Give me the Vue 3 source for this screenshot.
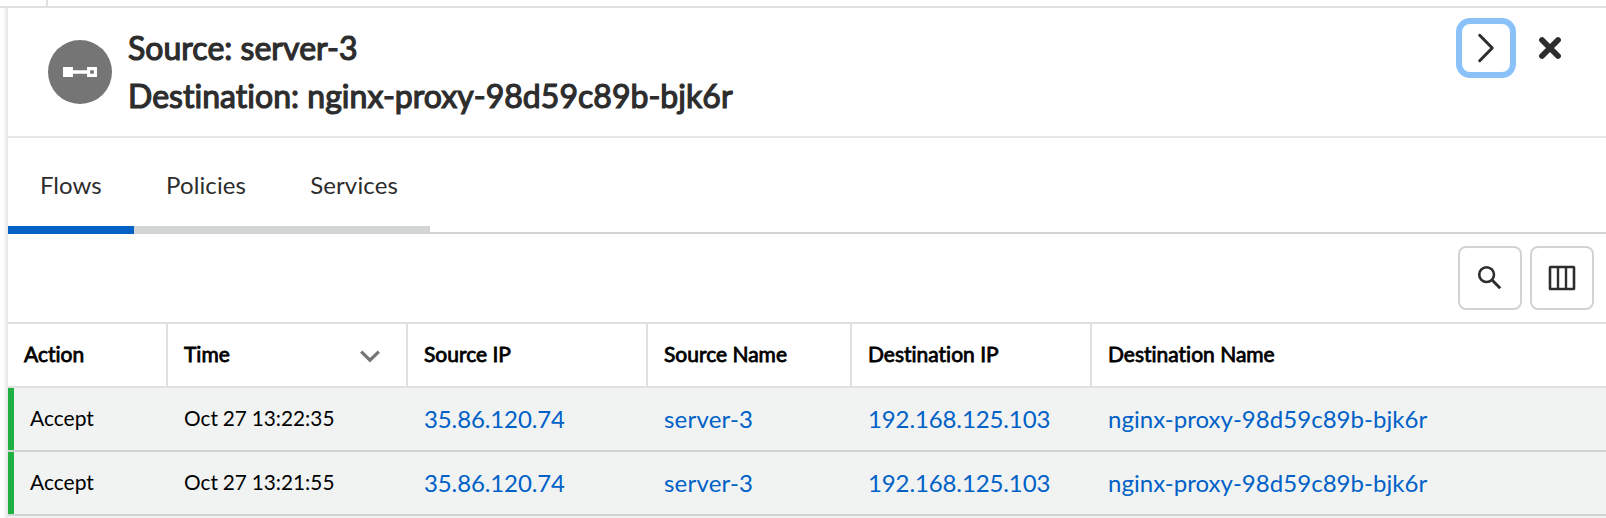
<script setup>
const tabs = [
  { label: 'Flows', active: true },
  { label: 'Policies', active: false },
  { label: 'Services', active: false },
]

const columns = ['Action', 'Time', 'Source IP', 'Source Name', 'Destination IP', 'Destination Name']

const flows = [
  { action: 'Accept', time: 'Oct 27 13:22:35', source: '35.86.120.74', sourceName: 'server-3', destination: '192.168.125.103', destinationName: 'nginx-proxy-98d59c89b-bjk6r' },
  { action: 'Accept', time: 'Oct 27 13:21:55', source: '35.86.120.74', sourceName: 'server-3', destination: '192.168.125.103', destinationName: 'nginx-proxy-98d59c89b-bjk6r' },
]
</script>

<template>
  <div class="page">
    <div class="strip"><div class="strip-cell"></div></div>
    <section class="panel">
      <header class="head">
        <div class="avatar">
          <svg width="64" height="64" viewBox="0 0 64 64">
            <circle cx="32" cy="32" r="32" fill="#757575" />
            <path fill="#fff" fill-rule="evenodd" d="M15 27h10v3.3h14V27h10v10H39v-3.3H25V37H15zM42.2 30.2v3.6h3.6v-3.6z" />
          </svg>
        </div>
        <h1 class="title">
          <span>Source: server-3</span>
          <span>Destination: nginx-proxy-98d59c89b-bjk6r</span>
        </h1>
        <div class="head-actions">
          <button class="expand" aria-label="Expand">
            <svg width="48" height="48" viewBox="0 0 48 48">
              <path d="M17.7 11.3L30.2 24L17.7 36.7" fill="none" stroke="#2d2d2d" stroke-width="3" stroke-linecap="round" stroke-linejoin="round" />
            </svg>
          </button>
          <button class="close" aria-label="Close">
            <svg width="24" height="24" viewBox="0 0 24 24">
              <path d="M4 4L20 20M20 4L4 20" fill="none" stroke="#2d2d2d" stroke-width="5.8" stroke-linecap="round" />
            </svg>
          </button>
        </div>
      </header>

      <nav class="tabs">
        <a v-for="tab in tabs" :key="tab.label" class="tab" :class="{ active: tab.active }">{{ tab.label }}</a>
      </nav>

      <div class="toolbar">
        <button class="tool" aria-label="Search">
          <svg width="60" height="60" viewBox="0 0 60 60" fill="none" stroke="#2d2d2d">
            <circle cx="26.6" cy="26.6" r="7.4" stroke-width="2.6" />
            <path d="M31.8 31.8L40.2 40.2" stroke-width="3" />
          </svg>
        </button>
        <button class="tool" aria-label="Columns">
          <svg width="60" height="60" viewBox="0 0 60 60" fill="none" stroke="#2d2d2d">
            <rect x="18" y="19" width="24" height="22" rx="0.6" stroke-width="2.6" />
            <path d="M26 19v22M34 19v22" stroke-width="2.4" />
          </svg>
        </button>
      </div>

      <div class="table">
        <div class="row columns">
          <div v-for="name in columns" :key="name" class="cell">
            <span>{{ name }}</span>
            <svg v-if="name === 'Time'" class="sort" width="20" height="13" viewBox="0 0 20 13">
              <path d="M1.2 1.6L10 10.2L18.8 1.6" fill="none" stroke="#757575" stroke-width="3.2" />
            </svg>
          </div>
        </div>
        <div v-for="flow in flows" :key="flow.time" class="row flow">
          <div class="cell action">{{ flow.action }}</div>
          <div class="cell time">{{ flow.time }}</div>
          <div class="cell link address">{{ flow.source }}</div>
          <div class="cell link host">{{ flow.sourceName }}</div>
          <div class="cell link address">{{ flow.destination }}</div>
          <div class="cell link">{{ flow.destinationName }}</div>
        </div>
        <div class="row next"></div>
      </div>
    </section>
  </div>
</template>

<style>
body {
  margin: 0;
  background: #fff;
}
</style>

<style scoped>
.page {
  width: 1606px;
  height: 518px;
  overflow: hidden;
  font-family: Lato, sans-serif;
  font-variant-ligatures: none;
  color: #2d2d2d;
  background: #fff;
}
.strip {
  box-sizing: border-box;
  height: 8px;
  border-bottom: 2px solid #e0e0e0;
}
.strip-cell {
  width: 46px;
  height: 6px;
  border-right: 2px solid #e0e0e0;
}
.panel {
  height: 510px;
  padding-left: 8px;
  background: linear-gradient(to right, #fff 2px, #fafafa 4px, #efefef 6px, #e4e5e5 8px, #fff 8px);
}
.head {
  box-sizing: border-box;
  height: 130px;
  display: flex;
  padding-left: 40px;
  border-bottom: 2px solid #e6e8e8;
}
.avatar {
  width: 64px;
  height: 64px;
  margin-top: 32px;
}
.avatar svg,
button svg {
  display: block;
}
.title {
  display: flex;
  flex-direction: column;
  margin: 16px 0 0 16px;
  font-size: 32px;
  font-weight: 400;
  line-height: 48px;
  letter-spacing: 0.03px;
  white-space: nowrap;
  -webkit-text-stroke: 1.2px currentColor;
}
.head-actions {
  display: flex;
  align-items: flex-start;
  margin-left: auto;
  padding: 10px 44px 0 0;
}
button {
  padding: 0;
  background: #fff;
  border: 0;
}
.expand {
  box-sizing: border-box;
  width: 60px;
  height: 60px;
  border: 6px solid #8bc1f9;
  border-radius: 14px;
}
.close {
  margin: 18px 0 0 22px;
}
.tabs {
  box-sizing: border-box;
  height: 96px;
  display: flex;
  box-shadow: inset 0 -2px #d3d5d4;
}
.tab {
  box-sizing: border-box;
  padding: 0 31.6px 0 32.4px;
  font-size: 24px;
  line-height: 93px;
  letter-spacing: 0.13px;
  border-bottom: 8px solid #d3d5d4;
}
.tab.active {
  padding: 0 32px;
  letter-spacing: 0;
  border-color: #0061c7;
}
.toolbar {
  box-sizing: border-box;
  height: 90px;
  display: flex;
  justify-content: flex-end;
  gap: 8px;
  padding: 12px 12px 0 0;
  border-bottom: 2px solid #e0e0e0;
}
.tool {
  box-sizing: border-box;
  width: 64px;
  height: 64px;
  border: 2px solid #d3d3d3;
  border-radius: 8px;
}
.row {
  box-sizing: border-box;
  display: grid;
  grid-template-columns: 160px 240px 240px 204px 240px 1fr;
  height: 64px;
}
.cell {
  box-sizing: border-box;
  height: 62px;
  padding-left: 16px;
  font-size: 21px;
  line-height: 60px;
  color: #000;
  white-space: nowrap;
}
.columns {
  border-bottom: 2px solid #e0e0e0;
}
.columns .cell {
  display: flex;
  justify-content: space-between;
  border-right: 2px solid #e0e0e0;
  -webkit-text-stroke: 0.8px currentColor;
}
.columns .cell:last-child {
  border-right: 0;
}
.sort {
  margin: 26px 26px 0 0;
}
.flow {
  background: #f1f3f3;
  border-bottom: 2px solid #d3d5d5;
}
.action {
  border-left: 6px solid #1eb141;
}
.time {
  font-size: 20.8px;
  word-spacing: -0.5px;
}
.link {
  font-size: 24px;
  line-height: 62px;
  letter-spacing: 0.03px;
  color: #0061c7;
}
.address {
  letter-spacing: -0.12px;
}
.host {
  letter-spacing: 0.2px;
}
.next {
  height: 2px;
  background: #f1f3f3;
}
</style>
